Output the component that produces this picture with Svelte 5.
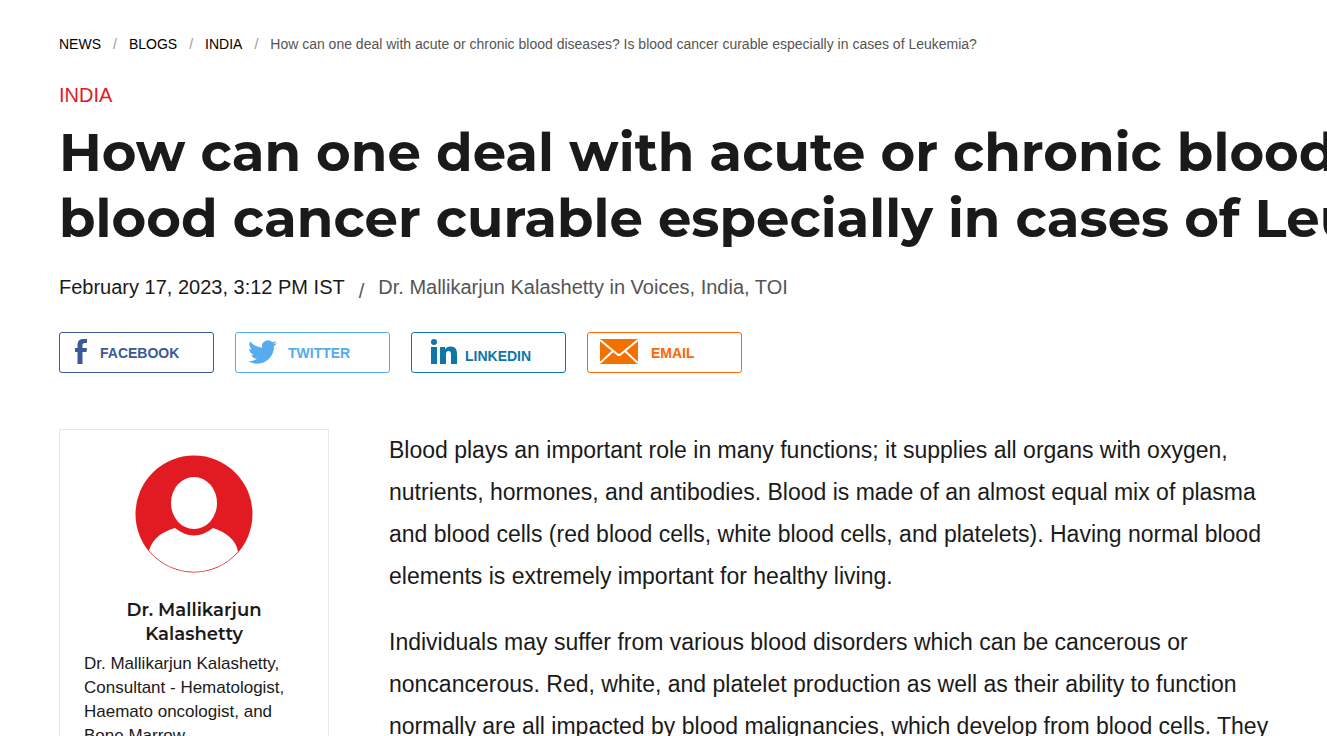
<script lang="ts">
  const title = 'How can one deal with acute or chronic blood diseases? Is blood cancer curable especially in cases of Leukemia?';
  const titleLines = [
    'How can one deal with acute or chronic blood diseases? Is',
    'blood cancer curable especially in cases of Leukemia?'
  ];
  const crumbs = ['NEWS', 'BLOGS', 'INDIA'];
  const shares = ['facebook', 'twitter', 'linkedin', 'email'];
</script>

<main class="page">
  <nav class="crumbs" aria-label="Breadcrumb">
    {#each crumbs as crumb}
      <a href="#top">{crumb}</a>
      <span class="slash">/</span>
    {/each}
    <span class="current">{title}</span>
  </nav>

  <a class="category" href="#india">INDIA</a>

  <h1>
    {#each titleLines as line}
      <span>{line}</span>
    {/each}
  </h1>

  <div class="meta">
    <time datetime="2023-02-17T15:12">February 17, 2023, 3:12 PM IST</time>
    <span class="slash">/</span>
    <span class="byline">
      <a href="#author">Dr. Mallikarjun Kalashetty</a> in <a href="#voices">Voices</a>, <a href="#india">India</a>, <a href="#toi">TOI</a>
    </span>
  </div>

  <div class="shares">
    {#each shares as share}
      <button type="button" class={`share ${share}`}>
        {#if share === 'facebook'}
          <svg width="12" height="25" viewBox="0 0 12 25" aria-hidden="true">
            <path d="M2.500 25V13H0V9h2.500V6c0-4 2-6 6-6H12v4h-2C8 4 7.500 5 7.500 6v3H12l-.5 4h-4v12z" />
          </svg>
        {:else if share === 'twitter'}
          <svg width="29" height="24" viewBox="0 0 24 20" aria-hidden="true">
            <path d="M24 2.6a10 10 0 0 1-2.8.8A5 5 0 0 0 23.3.7a10 10 0 0 1-3.1 1.2 4.9 4.9 0 0 0-8.4 4.5A14 14 0 0 1 1.7 1.2a4.9 4.9 0 0 0 1.5 6.6A5 5 0 0 1 1 7.2a4.9 4.9 0 0 0 3.9 4.9 5 5 0 0 1-2.2.1 4.9 4.9 0 0 0 4.6 3.4A10 10 0 0 1 0 17.6a14 14 0 0 0 7.5 2.2c9.1 0 14.4-7.7 14-14.6A10 10 0 0 0 24 2.6z" />
          </svg>
        {:else if share === 'linkedin'}
          <svg width="26" height="25" viewBox="0 0 26 25" aria-hidden="true">
            <circle cx="3" cy="3" r="3" />
            <path d="M0 8h6v17H0zM9 8h5v2.500c1-2 3-3 5.500-3 5 0 6.500 3 6.500 7.500v10h-6v-9c0-2.500-.5-4-2.500-4S15 13.500 15 16v9H9z" />
          </svg>
        {:else}
          <svg width="38" height="25" viewBox="0 0 38 25" aria-hidden="true">
            <path d="M0 0h38v25H0z" />
            <path class="fold" d="M0 1l17 14q2 2 4 0L38 1M0 24l13-12M38 24L25 12" />
          </svg>
        {/if}
        <span>{share.toUpperCase()}</span>
      </button>
    {/each}
  </div>

  <div class="content">
    <aside class="author">
      <svg width="118" height="118" viewBox="0 0 118 118" role="img" aria-label="Author">
        <circle class="disc" cx="59" cy="59" r="58.500" />
        <ellipse class="person" cx="59" cy="48" rx="23" ry="26" />
        <path class="person" d="M40 73Q59 88 78 73C91 77 101 85 103 96.500A58 58 0 0 1 14 95.500C18 83 27 77 40 73z" />
      </svg>
      <h2>Dr. Mallikarjun Kalashetty</h2>
      <p>Dr. Mallikarjun Kalashetty, Consultant - Hematologist, Haemato oncologist, and Bone Marrow</p>
    </aside>

    <article>
      <p>
        Blood plays an important role in many functions; it supplies all organs with oxygen, nutrients, hormones, and
        antibodies. Blood is made of an almost equal mix of plasma and blood cells (red blood cells, white blood cells,
        and platelets). Having normal blood elements is extremely important for healthy living.
      </p>
      <p>
        Individuals may suffer from various blood disorders which can be cancerous or noncancerous. Red, white, and
        platelet production as well as their ability to function normally are all impacted by blood malignancies, which
        develop from blood cells. They
      </p>
    </article>
  </div>
</main>

<style>
  :global(body) {
    margin: 0;
    overflow: hidden;
    background: #fff;
  }
  .page {
    padding: 36px 40px 0 59px;
    font-family: Arial, 'Liberation Sans', sans-serif;
    color: #1a1a1a;
  }
  a {
    color: inherit;
    text-decoration: none;
  }
  .crumbs {
    display: flex;
    gap: 12px;
    font-size: 14px;
    line-height: 16px;
    white-space: nowrap;
    color: #000;
  }
  .crumbs .slash { color: #999; }
  .crumbs .current { color: #555; }
  .category {
    display: block;
    margin-top: 30px;
    font-size: 20px;
    line-height: 26px;
    color: #e21b22;
  }
  h1 {
    margin: 11px 0 0;
    font-family: Montserrat, Inter, sans-serif;
    font-size: 53px;
    font-weight: 700;
    line-height: 66px;
    white-space: nowrap;
  }
  h1 span { display: block; }
  .meta {
    display: flex;
    gap: 14px;
    margin-top: 23px;
    font-size: 20px;
    line-height: 26px;
  }
  .meta .slash {
    padding-top: 4px;
    color: #555;
  }
  .byline { color: #555; }
  .shares {
    display: flex;
    gap: 21px;
    margin-top: 28px;
  }
  .share {
    display: flex;
    align-items: center;
    width: 155px;
    height: 41px;
    padding: 0 12px;
    border: 1px solid currentColor;
    border-radius: 3px;
    background: #fff;
    font: bold 14px/16px Arial, 'Liberation Sans', sans-serif;
    cursor: pointer;
  }
  .share svg {
    fill: currentColor;
    margin-bottom: 2px;
  }
  .facebook { gap: 13px; padding-left: 15px; color: #3b5998; }
  .twitter { gap: 11px; color: #55acee; }
  .linkedin { gap: 8px; padding-left: 19px; color: #0e76a8; }
  .linkedin span { padding-top: 6px; }
  .email { gap: 13px; color: #f60; }
  .email svg { fill: #f27100; }
  .email .fold {
    fill: none;
    stroke: #fff;
    stroke-width: 2;
  }
  .content {
    display: flex;
    align-items: flex-start;
    gap: 60px;
    margin-top: 56px;
  }
  .author {
    flex: none;
    box-sizing: border-box;
    width: 270px;
    padding: 25px 24px;
    border: 1px solid #e8e8e8;
    font-size: 17px;
    line-height: 24px;
  }
  .author svg {
    display: block;
    margin: 0 auto;
  }
  .disc { fill: #e21b22; }
  .person { fill: #fff; }
  .author h2 {
    margin: 25px 0 6px;
    font-family: Montserrat, Inter, sans-serif;
    font-size: 18px;
    font-weight: 600;
    text-align: center;
  }
  .author p { margin: 0; }
  article {
    font-size: 23px;
    line-height: 42px;
  }
  article p { margin: 0 0 24px; }
</style>
